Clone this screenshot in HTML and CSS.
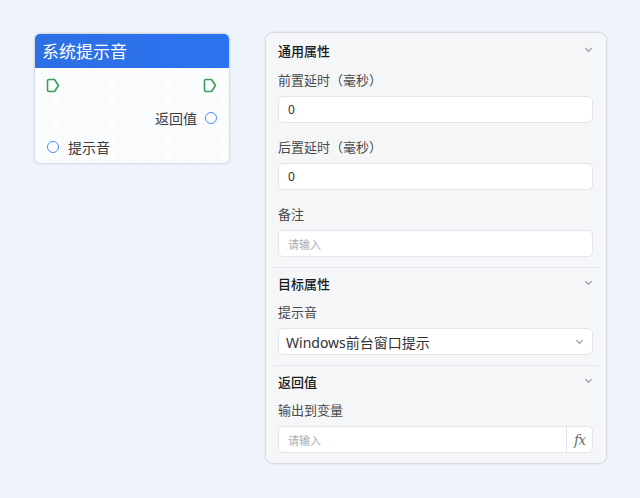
FILE: index.html
```html
<!DOCTYPE html>
<html lang="zh">
<head>
<meta charset="utf-8">
<title>系统提示音</title>
<link rel="stylesheet" href="styles.css">
</head>
<body>
<div class="canvas">
  <div class="node">
    <div class="node-head">系统提示音</div>
    <div class="node-body">
      <div class="row row-flow">
        <svg class="flow-port" width="14" height="15" viewBox="0 0 14 15"><path d="M1.5 3 Q1.5 1.5 3 1.5 H8.5 L12.5 7.5 L8.5 13.5 H3 Q1.5 13.5 1.5 12 Z" fill="none" stroke="#3c9d5a" stroke-width="1.6" stroke-linejoin="round"/></svg>
        <svg class="flow-port" width="14" height="15" viewBox="0 0 14 15"><path d="M1.5 3 Q1.5 1.5 3 1.5 H8.5 L12.5 7.5 L8.5 13.5 H3 Q1.5 13.5 1.5 12 Z" fill="none" stroke="#3c9d5a" stroke-width="1.6" stroke-linejoin="round"/></svg>
      </div>
      <div class="row row-out">
        <span class="port-label">返回值</span>
        <span class="dot"></span>
      </div>
      <div class="row row-in">
        <span class="dot"></span>
        <span class="port-label">提示音</span>
      </div>
    </div>
  </div>

  <div class="panel">
    <section class="sect sect-first">
      <div class="sect-head"><span>通用属性</span><span class="chev"></span></div>
      <div class="field">
        <div class="label">前置延时（毫秒）</div>
        <div class="input"><span class="val">0</span></div>
      </div>
      <div class="field">
        <div class="label">后置延时（毫秒）</div>
        <div class="input"><span class="val">0</span></div>
      </div>
      <div class="field">
        <div class="label">备注</div>
        <div class="input"><span class="ph">请输入</span></div>
      </div>
    </section>
    <div class="divider"></div>
    <section class="sect">
      <div class="sect-head"><span>目标属性</span><span class="chev"></span></div>
      <div class="field">
        <div class="label">提示音</div>
        <div class="input select"><span class="sel">Windows前台窗口提示</span><span class="chev chev-sel"></span></div>
      </div>
    </section>
    <div class="divider"></div>
    <section class="sect sect-last">
      <div class="sect-head"><span>返回值</span><span class="chev"></span></div>
      <div class="field">
        <div class="label">输出到变量</div>
        <div class="input fx-input"><span class="ph grow">请输入</span><span class="fx">fx</span></div>
      </div>
    </section>
  </div>
</div>
</body>
</html>
```

FILE: styles.css
```css
* { box-sizing: border-box; }
html, body { margin: 0; padding: 0; }
body {
  background: #eff3fb;
  font-family: "Noto Sans", "Noto Sans CJK SC", sans-serif;
  color: #303133;
  width: 640px;
  height: 498px;
  overflow: hidden;
}
.canvas {
  display: flex;
  align-items: flex-start;
  padding: 32px 0 0 34px;
  gap: 35px;
}

/* node */
.node {
  margin-top: 1px;
  width: 196px;
  height: 131px;
  border: 1px solid #d9dde5;
  border-radius: 6px;
  background-color: #fbfcfe;
  background-image:
    linear-gradient(#f6f8fc 1px, transparent 1px),
    linear-gradient(90deg, #f6f8fc 1px, transparent 1px);
  background-size: 14px 14px;
  box-shadow: 0 0 0 1px #e6e9ef;
  overflow: hidden;
}
.node-head {
  height: 34px;
  background: linear-gradient(90deg, #2d6fe4, #2b73f0);
  color: #fff;
  font-size: 17px;
  line-height: 34px;
  padding-left: 7px;
  font-family: "Noto Sans CJK SC", sans-serif;
}
.node-body {
  display: flex;
  flex-direction: column;
  padding: 5px 12px 0 11px;
}
.row {
  height: 24px;
  display: flex;
  align-items: center;
}
.row-flow { justify-content: space-between; }
.row-out { justify-content: flex-end; margin-top: 9px; gap: 8px; }
.row-in { margin-top: 5px; gap: 9px; padding-left: 1px; }
.flow-port { display: block; flex: none; }
.port-label {
  font-size: 14px;
  color: #3a3a3a;
  font-family: "Noto Sans CJK SC", sans-serif;
}
.dot {
  flex: none;
  width: 12px;
  height: 12px;
  border: 1.6px solid #4b8df5;
  border-radius: 50%;
  background: #fff;
}

/* panel */
.panel {
  width: 342px;
  height: 432px;
  border: 1px solid #d9dce3;
  border-radius: 8px;
  background: #f5f6f8;
  box-shadow: 0 0 0 1px #e8ebf0;
}
.sect { padding: 0 13px 10px 12px; }
.sect-first { padding-top: 1px; }
.sect-last { padding-bottom: 0; }
.sect-head {
  height: 30px;
  display: flex;
  align-items: center;
  justify-content: space-between;
  font-size: 13px;
  font-weight: 500;
  color: #1a1a1a;
  font-family: "Noto Sans CJK SC", sans-serif;
  margin-bottom: 6px;
}
.sect-first .sect-head { height: 32px; }
.chev {
  width: 5px;
  height: 5px;
  border-right: 1.3px solid #8a8d93;
  border-bottom: 1.3px solid #8a8d93;
  transform: rotate(45deg);
  margin-right: 2px;
  margin-top: -3px;
}
.field + .field { margin-top: 16px; }
.label {
  font-size: 13px;
  line-height: 16px;
  color: #4a4a4a;
  margin-bottom: 8px;
  font-family: "Noto Sans CJK SC", sans-serif;
}
.input {
  height: 27px;
  width: 315px;
  border: 1px solid #e2e5eb;
  border-radius: 5px;
  background: #fff;
  display: flex;
  align-items: center;
  padding: 0 9px;
}
.val { font-size: 12px; color: #333; }
.ph {
  font-size: 11px;
  color: #a8abb2;
  font-family: "Noto Sans CJK SC", sans-serif;
}
.select { justify-content: space-between; padding: 0 10px 0 7px; }
.sel {
  font-size: 14px;
  color: #333;
  font-family: "Noto Sans", "Noto Sans CJK SC", sans-serif;
}
.chev-sel { margin-right: 0; }
.divider {
  height: 1px;
  background: #e3e6ec;
  margin: 0 7px;
}
.fx-input { padding-right: 0; }
.grow { flex: 1; }
.fx {
  width: 26px;
  height: 100%;
  border-left: 1px solid #e2e5eb;
  display: flex;
  align-items: center;
  justify-content: center;
  font-family: "DejaVu Serif", serif;
  font-style: italic;
  font-size: 14px;
  color: #6a6d73;
  letter-spacing: -1px;
}
```
